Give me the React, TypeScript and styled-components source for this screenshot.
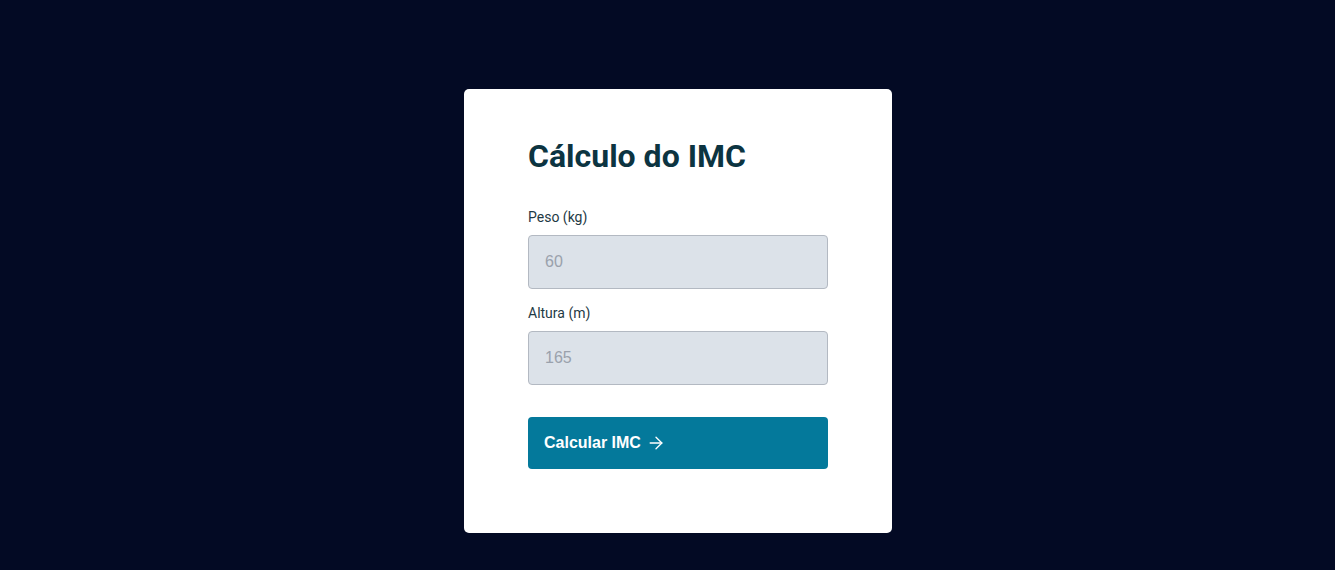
import styled, { createGlobalStyle } from "styled-components";
import { ArrowRight } from "lucide-react";

const GlobalStyle = createGlobalStyle`
  * {
    box-sizing: border-box;
  }
  body {
    margin: 0;
    background: #030a24;
    font-family: Roboto, "Liberation Sans", sans-serif;
  }
`;

const Page = styled.main`
  min-height: 570px;
  display: flex;
  justify-content: center;
  align-items: flex-start;
  padding: 89px 0 0 21px;
`;

const Card = styled.form`
  width: 428px;
  background: #ffffff;
  border-radius: 5px;
  padding: 48px 64px 64px;
  display: flex;
  flex-direction: column;
`;

const Title = styled.h1`
  margin: 0 0 34px;
  font-size: 32px;
  line-height: 1.2;
  font-weight: 700;
  color: #0c3441;
`;

const Field = styled.div`
  display: flex;
  flex-direction: column;
  & + & {
    margin-top: 16px;
  }
`;

const Label = styled.label`
  font-size: 14px;
  line-height: normal;
  color: #1f3a45;
  margin-bottom: 10px;
`;

const Input = styled.input`
  height: 54px;
  width: 100%;
  padding: 0 16px;
  background: #dce2e9;
  border: 1px solid #b3b9c2;
  border-radius: 4px;
  font-family: "Liberation Sans", Arial, sans-serif;
  font-size: 16px;
  color: #1f3a45;
  outline: none;

  &::placeholder {
    color: #9aa1ac;
  }
`;

const Button = styled.button`
  margin-top: 32px;
  height: 52px;
  width: 100%;
  display: flex;
  align-items: center;
  gap: 5px;
  padding: 0 16px;
  background: #04799b;
  border: none;
  border-radius: 4px;
  color: #ffffff;
  font-family: "Liberation Sans", Arial, sans-serif;
  font-size: 16px;
  font-weight: 700;
  cursor: pointer;
`;

const fields = [
  { id: "peso", label: "Peso (kg)", placeholder: "60" },
  { id: "altura", label: "Altura (m)", placeholder: "165" },
];

const App = () => {
  return (
    <>
      <GlobalStyle />
      <Page>
        <Card onSubmit={(e) => e.preventDefault()}>
          <Title>Cálculo do IMC</Title>
          {fields.map((field) => (
            <Field key={field.id}>
              <Label htmlFor={field.id}>{field.label}</Label>
              <Input id={field.id} type="text" placeholder={field.placeholder} />
            </Field>
          ))}
          <Button type="submit">
            Calcular IMC
            <ArrowRight size={20} strokeWidth={1.6} />
          </Button>
        </Card>
      </Page>
    </>
  );
};

export default App;
